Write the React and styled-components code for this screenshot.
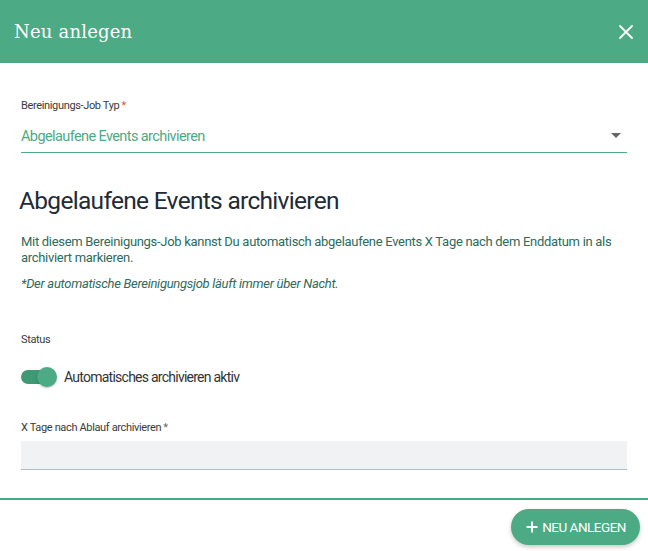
import React from 'react';
import styled, { createGlobalStyle } from 'styled-components';

const GREEN = '#4caa85';

const GlobalStyle = createGlobalStyle`
    html, body {
        margin: 0;
        padding: 0;
        background: #fff;
    }
    body {
        font-family: Roboto, "Liberation Sans", sans-serif;
        color: #333;
    }
`;

const Dialog = styled.div`
    width: 648px;
    height: 551px;
    display: flex;
    flex-direction: column;
    background: #fff;
    overflow: hidden;
`;

const Header = styled.header`
    height: 63px;
    flex-shrink: 0;
    background: ${GREEN};
    display: flex;
    align-items: center;
    justify-content: space-between;
    padding: 0 14px 0 14px;
    box-sizing: border-box;
`;

const Title = styled.h2`
    margin: 0;
    font-family: "DejaVu Serif", "Liberation Serif", serif;
    font-weight: normal;
    font-size: 18px;
    color: #fff;
    letter-spacing: 0.2px;
`;

const CloseButton = styled.button`
    border: 0;
    background: transparent;
    padding: 0;
    width: 16px;
    height: 16px;
    display: flex;
    align-items: center;
    justify-content: center;
    cursor: pointer;
`;

const Body = styled.div`
    flex: 1;
    padding: 36px 21px 0 21px;
    box-sizing: border-box;
`;

const Label = styled.label`
    display: block;
    font-size: 11px;
    letter-spacing: -0.35px;
    color: #3a3a3a;
    margin-top: ${p => p.$top || 0}px;

    span {
        color: ${p => (p.$redStar ? '#d9534f' : '#666')};
        margin-left: 2px;
    }
`;

const SelectRow = styled.div`
    display: flex;
    align-items: center;
    justify-content: space-between;
    height: 31px;
    border-bottom: 1px solid ${GREEN};
    padding-right: 6px;
    margin-top: 9px;
`;

const SelectValue = styled.div`
    font-size: 14.5px;
    letter-spacing: -0.6px;
    color: ${GREEN};
`;

const Arrow = styled.div`
    width: 0;
    height: 0;
    border-left: 5px solid transparent;
    border-right: 5px solid transparent;
    border-top: 5px solid #666;
    margin-top: -3px;
`;

const Heading = styled.h1`
    margin: 33px 0 0 -2px;
    font-size: 24.5px;
    font-weight: normal;
    letter-spacing: -0.7px;
    color: #222b36;
`;

const Text = styled.p`
    margin: ${p => p.$top || 0}px 0 0 0;
    font-size: 13px;
    line-height: 16px;
    letter-spacing: -0.3px;
    color: #2d6b5b;
    font-style: ${p => (p.$italic ? 'italic' : 'normal')};
`;

const ToggleRow = styled.div`
    display: flex;
    align-items: center;
    gap: 7px;
    margin-top: 20px;
    height: 22px;
`;

const Track = styled.div`
    position: relative;
    width: 31px;
    height: 14px;
    border-radius: 7px;
    background: #3e9a74;
`;

const Thumb = styled.div`
    position: absolute;
    right: -5px;
    top: -3px;
    width: 20px;
    height: 20px;
    border-radius: 50%;
    background: ${GREEN};
    box-shadow: 0 1px 2px rgba(0, 0, 0, 0.25);
`;

const ToggleLabel = styled.span`
    font-size: 14px;
    letter-spacing: -0.75px;
    color: #333;
    margin-left: 5px;
`;

const Input = styled.input`
    display: block;
    width: 100%;
    height: 29px;
    box-sizing: border-box;
    border: 0;
    border-bottom: 1px solid #b4bcc5;
    background: #f1f2f4;
    outline: none;
    margin-top: 7px;
`;

const Footer = styled.footer`
    border-top: 2px solid #45ab82;
    height: 53px;
    flex-shrink: 0;
    display: flex;
    justify-content: flex-end;
    align-items: flex-start;
    padding: 9px 8px 0 0;
    box-sizing: border-box;
`;

const PrimaryButton = styled.button`
    height: 36px;
    padding: 0 14px 0 15px;
    border: 0;
    border-radius: 18px;
    background: ${GREEN};
    color: #fff;
    font-family: Roboto, "Liberation Sans", sans-serif;
    font-size: 13.5px;
    letter-spacing: -0.5px;
    display: flex;
    align-items: center;
    gap: 4px;
    box-shadow: 0 2px 4px rgba(0, 0, 0, 0.22);
    cursor: pointer;
`;

export default function App() {
    return (
        <Dialog>
            <GlobalStyle/>
            <Header>
                <Title>Neu anlegen</Title>
                <CloseButton aria-label="close">
                    <svg width="14" height="14" viewBox="0 0 14 14">
                        <path d="M1 1L13 13M13 1L1 13" stroke="#fff" strokeWidth="1.8" strokeLinecap="round"/>
                    </svg>
                </CloseButton>
            </Header>

            <Body>
                <Label $redStar>Bereinigungs-Job Typ<span>*</span></Label>
                <SelectRow>
                    <SelectValue>Abgelaufene Events archivieren</SelectValue>
                    <Arrow/>
                </SelectRow>

                <Heading>Abgelaufene Events archivieren</Heading>
                <Text $top={19}>
                    Mit diesem Bereinigungs-Job kannst Du automatisch abgelaufene Events X Tage nach dem Enddatum in als
                    archiviert markieren.
                </Text>
                <Text $top={10} $italic>*Der automatische Bereinigungsjob läuft immer über Nacht.</Text>

                <Label $top={41}>Status</Label>
                <ToggleRow>
                    <Track><Thumb/></Track>
                    <ToggleLabel>Automatisches archivieren aktiv</ToggleLabel>
                </ToggleRow>

                <Label $top={33}>X Tage nach Ablauf archivieren<span>*</span></Label>
                <Input type="text"/>
            </Body>

            <Footer>
                <PrimaryButton>
                    <svg width="12" height="12" viewBox="0 0 12 12">
                        <path d="M6 0.5V11.5M0.5 6H11.5" stroke="#fff" strokeWidth="2"/>
                    </svg>
                    NEU ANLEGEN
                </PrimaryButton>
            </Footer>
        </Dialog>
    );
}
